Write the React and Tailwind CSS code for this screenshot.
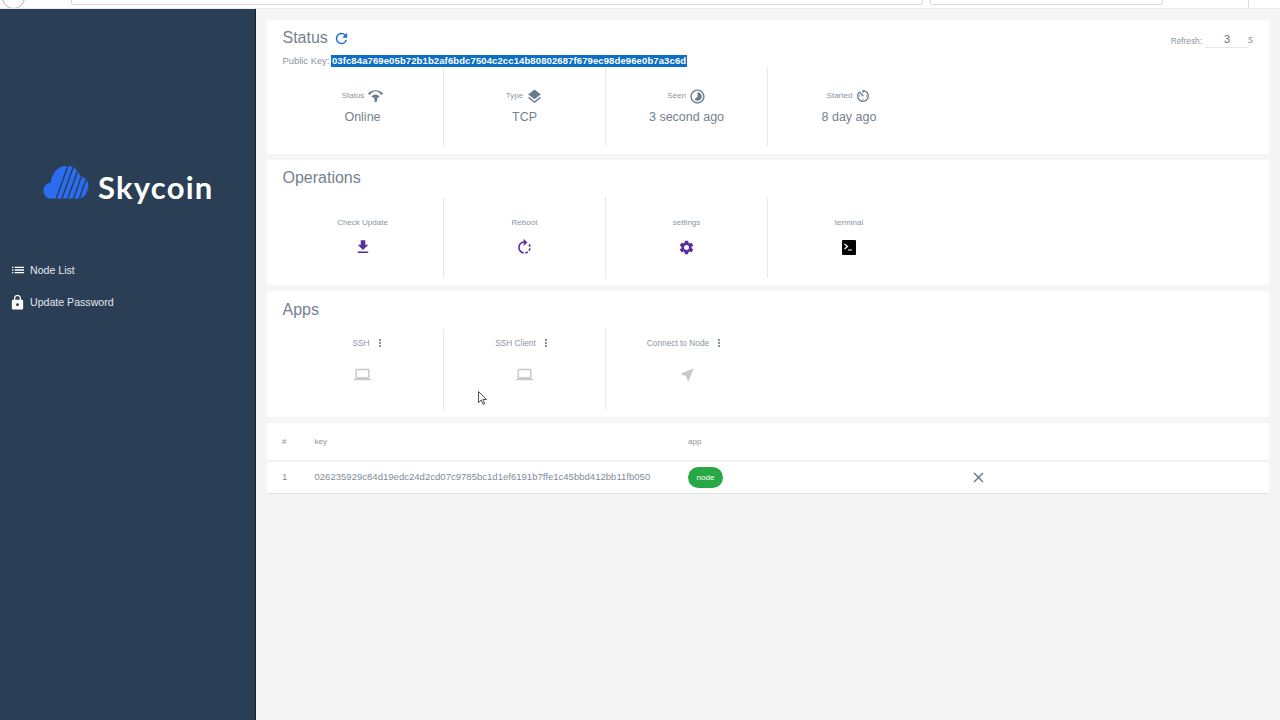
import {
  MdRefresh, MdLayers, MdTimelapse, MdAvTimer, MdFileDownload, MdRotateRight,
  MdSettings, MdLaptop, MdNearMe, MdMoreVert, MdList, MdLock, MdClose,
} from "react-icons/md";

const sans = "font-['Liberation_Sans',Arial,sans-serif]";

const Logo = () => (
  <svg width="46" height="35" viewBox="0 0 48 36" className="shrink-0 -mt-[10px]">
    <defs>
      <clipPath id="cloud">
        <path d="M9 35C4 35 .5 31 .5 26.500c0-4.500 3.300-7.800 7.500-8.200C9 9.500 15 .5 24.500 .5c7 0 12.600 4.400 14.400 11.100 5.400.8 8.600 5.400 8.600 10.900 0 7-5 12.500-11.500 12.500z" />
      </clipPath>
    </defs>
    <g clipPath="url(#cloud)">
      <rect x="0" y="0" width="48" height="36" fill="#2b6cf0" />
      <g stroke="#2a3f55" strokeWidth="1.500">
        <path d="M13 37 27 -2M19 37 33 -2M25 37 39 -2M31 37 45 -2M37 37 51 -2M43 37 57 -2" />
      </g>
    </g>
  </svg>
);

const WifiIcon = ({ className }) => (
  <svg width="15" height="12" viewBox="0 0 15 12" className={className}>
    <path d="M0 3.200C4.300-.9 10.700-.9 15 3.200l-1.700 2C10-.2 5-.2 1.700 5.200z" fill="currentColor" />
    <path d="M3.300 6.500C5.800 3.800 9.200 3.800 11.700 6.500L9.500 8 8.600 12H6.800L6.200 8z" fill="currentColor" />
  </svg>
);

const Cell = ({ children, last }) => (
  <div className={`w-[162px] h-full flex flex-col items-center ${last ? "" : "border-r border-[#e6e8ea]"}`}>
    {children}
  </div>
);

const StatusCell = ({ label, icon, value, last }) => (
  <Cell last={last}>
    <div className="flex items-center gap-[3px] h-[16px] mt-[21px] text-[8px] text-[#8a96a3]">
      {label}
      {icon}
    </div>
    <div className="mt-[5px] text-[12.500px] leading-[16px] text-[#74828f]">{value}</div>
  </Cell>
);

const OpCell = ({ label, children, last }) => (
  <Cell last={last}>
    <div className="mt-[20px] text-[8px] leading-[12px] text-[#8a96a3]">{label}</div>
    <div className="mt-[8px] h-[20px] flex items-center justify-center">{children}</div>
  </Cell>
);

const AppCell = ({ label, Icon, last, offset }) => (
  <Cell last={last}>
    <div className={`mt-[7px] h-[14px] flex items-center gap-[4px] text-[8.300px] text-[#8a96a3] ${offset}`}>
      {label}
      <MdMoreVert className="text-[#6c7a8a] text-[12px]" />
    </div>
    <Icon className="mt-[16px] text-[#c6c8ca] text-[17px]" />
  </Cell>
);

const Card = ({ children, className }) => (
  <section className={`bg-white ${className}`}>{children}</section>
);

export default function App() {
  return (
    <div className={`relative h-[720px] w-[1280px] overflow-hidden bg-[#f5f5f5] ${sans}`}>
      {/* browser chrome that is left on top of the capture */}
      <div className="h-[9px] bg-white border-b border-[#ececec] flex items-end overflow-hidden">
        <div className="ml-[2px] w-[23px] h-[23px] shrink-0 rounded-full border border-[#b5b5b5] mb-[-1px]" />
        <div className="ml-[46px] w-[852px] h-[20px] shrink-0 rounded-[2px] border border-[#d9d9d9] mb-[3px]" />
        <div className="ml-[7px] w-[233px] h-[20px] shrink-0 rounded-[2px] border border-[#d9d9d9] mb-[3px]" />
        <div className="ml-[9px] w-[11px] h-[1px] shrink-0 bg-[#777] mb-[8px]" />
        <div className="ml-[65px] w-[1px] h-[9px] shrink-0 bg-[#ddd]" />
      </div>

      <div className="flex h-[711px]">
        <aside className="w-[256px] shrink-0 bg-[#2a3f55] border-r border-[#16222f]">
          <div className="mt-[155px] ml-[43px] flex items-center gap-[9px] h-[46px]">
            <Logo />
            <span className="font-['Lato',sans-serif] font-bold text-[31px] leading-none text-white tracking-[1.200px]">Skycoin</span>
          </div>
          <nav className="mt-[45px] text-[10.600px] text-[#e3e8ed]">
            <div className="flex items-center h-[32px] pl-[10px] gap-[4px]">
              <MdList className="text-[16px] text-white -mt-[2px]" />
              Node List
            </div>
            <div className="flex items-center h-[32px] pl-[9px] gap-[4px]">
              <MdLock className="text-[17px] text-white -mt-[2px]" />
              Update Password
            </div>
          </nav>
        </aside>

        <main className="flex-1 pt-[11px] pl-[11px] pr-[11px]">
          <Card className="h-[134px]">
            <div className="flex justify-between pl-[15.500px] pr-[16px] h-[48px]">
              <div>
                <div className="flex items-center gap-[5px] pt-[8px] h-[28px] text-[16px] text-[#74828f]">
                  Status
                  <MdRefresh className="text-[#1f6fd0] text-[17px]" />
                </div>
                <div className="mt-[6px] flex items-center h-[14px] text-[9.400px] text-[#8a96a3] whitespace-nowrap">
                  Public Key:
                  <span className="ml-[1.500px] px-[1px] bg-[#0c6ec4] text-white font-bold text-[9.500px] leading-[12px] tracking-[0.11px]">03fc84a769e05b72b1b2af6bdc7504c2cc14b80802687f679ec98de96e0b7a3c6d</span>
                </div>
              </div>
              <div className="flex items-start pt-[11px] text-[8.300px] text-[#8a96a3]">
                <span className="mt-[4px]">Refresh:</span>
                <span className="ml-[3px] w-[43px] h-[17px] border-b border-[#e4e6e8] text-center text-[11px] text-[#6b6b6b] pl-[1px]">3</span>
                <span className="text-[10px] mt-[1px]">s</span>
              </div>
            </div>
            <div className="flex h-[79px] -mt-[1px] pl-[15px]">
              <StatusCell label="Status" icon={<WifiIcon className="text-[#6c7a8a] ml-[1px]" />} value="Online" />
              <StatusCell label="Type" icon={<MdLayers className="text-[#6c7a8a] text-[17px]" />} value="TCP" />
              <StatusCell label="Seen" icon={<MdTimelapse className="text-[#6c7a8a] text-[17px]" />} value="3 second ago" />
              <StatusCell label="Started" icon={<MdAvTimer className="text-[#6c7a8a] text-[16px]" />} value="8 day ago" last />
            </div>
          </Card>

          <Card className="h-[125px] mt-[6px]">
            <div className="pl-[15.500px] pt-[8px] h-[37px] text-[16px] leading-[20px] text-[#74828f]">Operations</div>
            <div className="flex h-[81px] pl-[15px]">
              <OpCell label="Check Update"><MdFileDownload className="text-[#5b2e9e] text-[18px]" /></OpCell>
              <OpCell label="Reboot"><MdRotateRight className="text-[#5b2e9e] text-[19px]" /></OpCell>
              <OpCell label="settings"><MdSettings className="text-[#5b2e9e] text-[17px]" /></OpCell>
              <OpCell label="terminal" last>
                <svg width="14" height="15" viewBox="0 0 14 15">
                  <rect width="14" height="15" rx="1" fill="#000" />
                  <path d="M2.500 4 5.500 6.500 2.500 9" stroke="#fff" strokeWidth="1.200" fill="none" />
                  <path d="M6 10h4" stroke="#fff" strokeWidth="1" />
                </svg>
              </OpCell>
            </div>
          </Card>

          <Card className="h-[126px] mt-[6px]">
            <div className="pl-[15.500px] pt-[9px] h-[38px] text-[16px] leading-[20px] text-[#74828f]">Apps</div>
            <div className="flex h-[81px] pl-[15px]">
              <AppCell label="SSH" Icon={MdLaptop} offset="pl-[13px]" />
              <AppCell label="SSH Client" Icon={MdLaptop} offset="pr-[2px]" />
              <AppCell label="Connect to Node" Icon={MdNearMe} offset="pr-[2px]" last />
            </div>
          </Card>

          <Card className="mt-[6px] border-b border-[#e2e2e2]">
            <div className="flex items-center h-[39px] border-b-2 border-[#f0f0f0] text-[8px] text-[#8f8f8f]">
              <span className="w-[47.500px] pl-[15px]">#</span>
              <span className="w-[373.500px]">key</span>
              <span>app</span>
            </div>
            <div className="flex items-center h-[31px] text-[9.550px] text-[#7f8b98]">
              <span className="w-[47.500px] pl-[15px]">1</span>
              <span className="w-[373.500px]">026235929c84d19edc24d2cd07c9785bc1d1ef6191b7ffe1c45bbd412bb11fb050</span>
              <span className="w-[35px] h-[21px] rounded-full bg-[#28a745] text-white text-[8px] flex items-center justify-center">node</span>
              <MdClose className="ml-[247px] text-[#65788c] text-[17px]" />
            </div>
          </Card>
        </main>
      </div>

      {/* mouse pointer captured in the recording */}
      <svg className="absolute left-[478px] top-[391px]" width="10" height="15" viewBox="0 0 10 15">
        <path d="M.5.5v11l2.700-2.400 1.800 4.200 1.700-.7-1.800-4.100 3.600-.1z" fill="#fff" stroke="#222" strokeWidth=".8" />
      </svg>
    </div>
  );
}
